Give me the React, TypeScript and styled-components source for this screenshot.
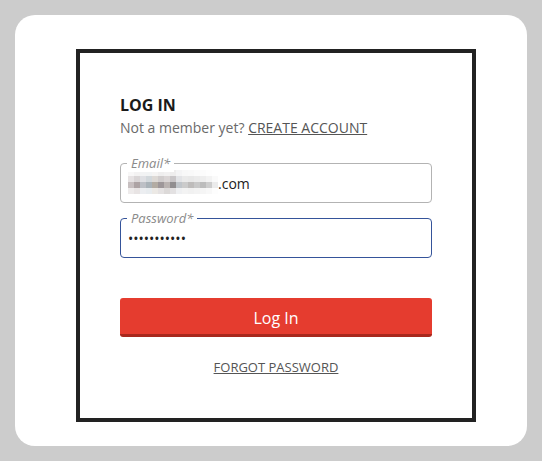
import React from "react";
import styled, { createGlobalStyle } from "styled-components";

const Global = createGlobalStyle`
  html, body { margin: 0; padding: 0; background: #cccccc; }
  body { font-family: "Open Sans", "Liberation Sans", sans-serif; }
  * { box-sizing: border-box; }
`;

const Page = styled.div`
  padding: 15px;
`;

const Card = styled.div`
  width: 512px;
  height: 431px;
  background: #ffffff;
  border-radius: 20px;
  padding: 34px 0 0 61px;
`;

const Panel = styled.form`
  width: 400px;
  height: 373px;
  border: 4px solid #222222;
  padding: 41px 40px 0;
  display: flex;
  flex-direction: column;
`;

const Title = styled.h1`
  margin: 0;
  font-size: 16px;
  line-height: 22px;
  font-weight: 700;
  color: #1b1b1b;
`;

const Subtitle = styled.p`
  margin: 2px 0 0;
  font-size: 14px;
  line-height: 20px;
  color: #6a6a6a;
`;

const TextLink = styled.a`
  color: #555555;
  text-decoration: underline;
  cursor: pointer;
`;

const Fields = styled.div`
  margin-top: 25px;
  display: flex;
  flex-direction: column;
  gap: 15px;
`;

const Field = styled.label<{ $focused?: boolean }>`
  position: relative;
  height: 40px;
  border: 1px solid ${(p) => (p.$focused ? "#35549a" : "#b3b3b3")};
  border-radius: 4px;
  display: flex;
  align-items: center;
  padding: 0 7px;
`;

const FieldLabel = styled.span`
  position: absolute;
  left: 6px;
  top: -9px;
  padding: 0 4px;
  background: #ffffff;
  font-size: 13px;
  line-height: 17px;
  font-style: italic;
  color: #8a8a8a;
`;

const ValueText = styled.span`
  font-size: 14px;
  line-height: 19px;
  color: #222222;
`;

const PasswordInput = styled.input`
  border: 0;
  outline: none;
  background: transparent;
  width: 100%;
  padding: 0;
  font-family: "Open Sans", "Liberation Sans", sans-serif;
  font-size: 14px;
  line-height: 19px;
  color: #222222;
`;

const Mosaic = styled.span`
  display: inline-grid;
  grid-template-columns: repeat(15, 6px);
  grid-auto-rows: 6px;
  margin-top: -2px;
`;

const Tile = styled.span<{ $c: string }>`
  background: ${(p) => p.$c};
`;

const Submit = styled.button`
  margin-top: 40px;
  height: 39px;
  padding: 4px 0 0;
  border: 0;
  border-bottom: 3px solid #a8281d;
  border-radius: 3px;
  background: #e53c2f;
  color: #ffffff;
  font-family: "Open Sans", "Liberation Sans", sans-serif;
  font-size: 16px;
  cursor: pointer;
`;

const Forgot = styled.div`
  margin-top: 21px;
  text-align: center;
  font-size: 13px;
  line-height: 18px;
`;

const rows: string[][] = [
  ["#f8f7f7", "#f3f2f2", "#f2f3f4", "#f1f3f4", "#f5f4f3", "#efeeee", "#f2f1f1", "#eeeded", "#f4f4f5", "#f8f8f8", "#f9f9f9", "#fbfbfb", "#fcfcfc", "#fefefe", "#ffffff"],
  ["#e6e2e3", "#d9d5d6", "#dfe0e4", "#d2d8dc", "#ddd9d5", "#d1cdcd", "#dad5d5", "#c9c6c8", "#e2e3e6", "#eaeaea", "#e8e8e8", "#ebebeb", "#eeeeee", "#f3f3f3", "#fafafa"],
  ["#c7bfc0", "#ada3a4", "#bdc0c6", "#aab3b9", "#b3aca3", "#9e9799", "#bab3b1", "#918e90", "#c0c5ca", "#cbcbcb", "#bebcbb", "#c8c8c8", "#bcbcbc", "#cdcdcd", "#ebebeb"],
  ["#eeebeb", "#e8e4e4", "#eceef1", "#e8ecef", "#ece9e5", "#e5e2e2", "#dcd9d8", "#e3e1e2", "#eff0f2", "#f3f3f3", "#f1f1f1", "#f3f3f3", "#f5f5f5", "#f8f8f8", "#fdfdfd"],
];

export default function App() {
  return (
    <>
      <Global />
      <Page>
        <Card>
          <Panel onSubmit={(e) => e.preventDefault()}>
            <Title>LOG IN</Title>
            <Subtitle>
              Not a member yet? <TextLink>CREATE ACCOUNT</TextLink>
            </Subtitle>
            <Fields>
              <Field>
                <FieldLabel>Email*</FieldLabel>
                <Mosaic aria-hidden="true">
                  {rows.flat().map((c, i) => (
                    <Tile key={i} $c={c} />
                  ))}
                </Mosaic>
                <ValueText>.com</ValueText>
              </Field>
              <Field $focused>
                <FieldLabel>Password*</FieldLabel>
                <PasswordInput type="password" value="passwordxyz" readOnly />
              </Field>
            </Fields>
            <Submit type="submit">Log In</Submit>
            <Forgot>
              <TextLink>FORGOT PASSWORD</TextLink>
            </Forgot>
          </Panel>
        </Card>
      </Page>
    </>
  );
}
